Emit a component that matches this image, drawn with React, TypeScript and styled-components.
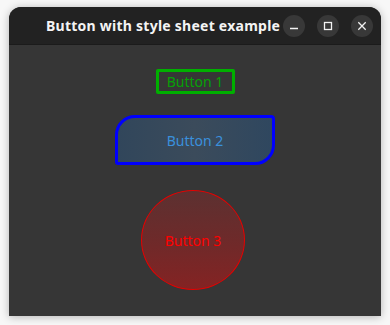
import styled, { createGlobalStyle } from 'styled-components';

const GlobalStyle = createGlobalStyle`
  html, body {
    margin: 0;
    padding: 0;
    background: #f7f7f7;
  }

  body {
    font-family: "Noto Sans", "DejaVu Sans", sans-serif;
  }
`;

const PageStyled = styled.div`
  width: 390px;
  height: 325px;
  padding: 7px 9px 0 9px;
  box-sizing: border-box;
  overflow: hidden;
`;

const WindowStyled = styled.div`
  width: 372px;
  height: 309px;
  display: flex;
  flex-direction: column;
  border-radius: 12px 12px 0 0;
  overflow: hidden;
  background: #363636;
  box-shadow: 0 1px 9px rgba(0, 0, 0, 0.28);
`;

const TitleBarStyled = styled.div`
  height: 37px;
  flex-shrink: 0;
  display: flex;
  align-items: center;
  padding: 0 8px 0 37px;
  background: #222222;
  border-bottom: 1px solid #1b1b1b;
`;

const TitleStyled = styled.div`
  flex: 1;
  color: #f4f4f4;
  font-size: 14px;
  font-weight: 700;
  white-space: nowrap;
  letter-spacing: 0.25px;
`;

const ControlsStyled = styled.div`
  display: flex;
  gap: 12px;
`;

const ControlStyled = styled.div`
  width: 22px;
  height: 22px;
  border-radius: 50%;
  background: #383838;
  display: flex;
  align-items: center;
  justify-content: center;

  svg {
    display: block;
  }
`;

const ContentStyled = styled.div`
  flex: 1;
  display: flex;
  flex-direction: column;
  align-items: center;
  padding-top: 24px;
`;

const ButtonBase = styled.button<{ $mt?: number }>`
  margin-top: ${(p) => p.$mt ?? 0}px;
  padding: 0;
  box-sizing: border-box;
  display: flex;
  align-items: center;
  justify-content: center;
  font-family: "Noto Sans", "DejaVu Sans", sans-serif;
  font-size: 14px;
  cursor: pointer;
`;

const GreenButton = styled(ButtonBase)`
  width: 79px;
  height: 25px;
  background: transparent;
  border: 3px solid #00b000;
  border-radius: 2px;
  color: #06a006;
`;

const BlueButton = styled(ButtonBase)`
  width: 160px;
  height: 50px;
  border: 3px solid #0000ff;
  border-radius: 20px 4px 20px 3px;
  background: linear-gradient(90deg, #31465b 0%, #3b4b5b 50%, #2f475f 100%);
  color: #3a90dc;
`;

const RedButton = styled(ButtonBase)`
  width: 104px;
  height: 100px;
  margin-right: 4px;
  border: 1px solid #e60000;
  border-radius: 50%;
  background: linear-gradient(180deg, #5c3131 0%, #6e2a2a 50%, #842323 100%);
  color: #ff0000;
`;

const App = () => {
  return (
    <>
      <GlobalStyle />
      <PageStyled>
        <WindowStyled>
          <TitleBarStyled>
            <TitleStyled>Button with style sheet example</TitleStyled>
            <ControlsStyled>
              <ControlStyled>
                <svg width="10" height="10" viewBox="0 0 10 10">
                  <path d="M1 7.5h8" stroke="#f2f2f2" strokeWidth="1.3" />
                </svg>
              </ControlStyled>
              <ControlStyled>
                <svg width="10" height="10" viewBox="0 0 10 10">
                  <rect x="1.5" y="1.5" width="7" height="7" fill="none" stroke="#f2f2f2" strokeWidth="1.3" />
                </svg>
              </ControlStyled>
              <ControlStyled>
                <svg width="10" height="10" viewBox="0 0 10 10">
                  <path d="M1.3 1.3l7.4 7.4M8.7 1.3l-7.4 7.4" stroke="#f2f2f2" strokeWidth="1.3" />
                </svg>
              </ControlStyled>
            </ControlsStyled>
          </TitleBarStyled>
          <ContentStyled>
            <GreenButton>Button 1</GreenButton>
            <BlueButton $mt={21}>Button 2</BlueButton>
            <RedButton $mt={25}>Button 3</RedButton>
          </ContentStyled>
        </WindowStyled>
      </PageStyled>
    </>
  );
};

export default App;
